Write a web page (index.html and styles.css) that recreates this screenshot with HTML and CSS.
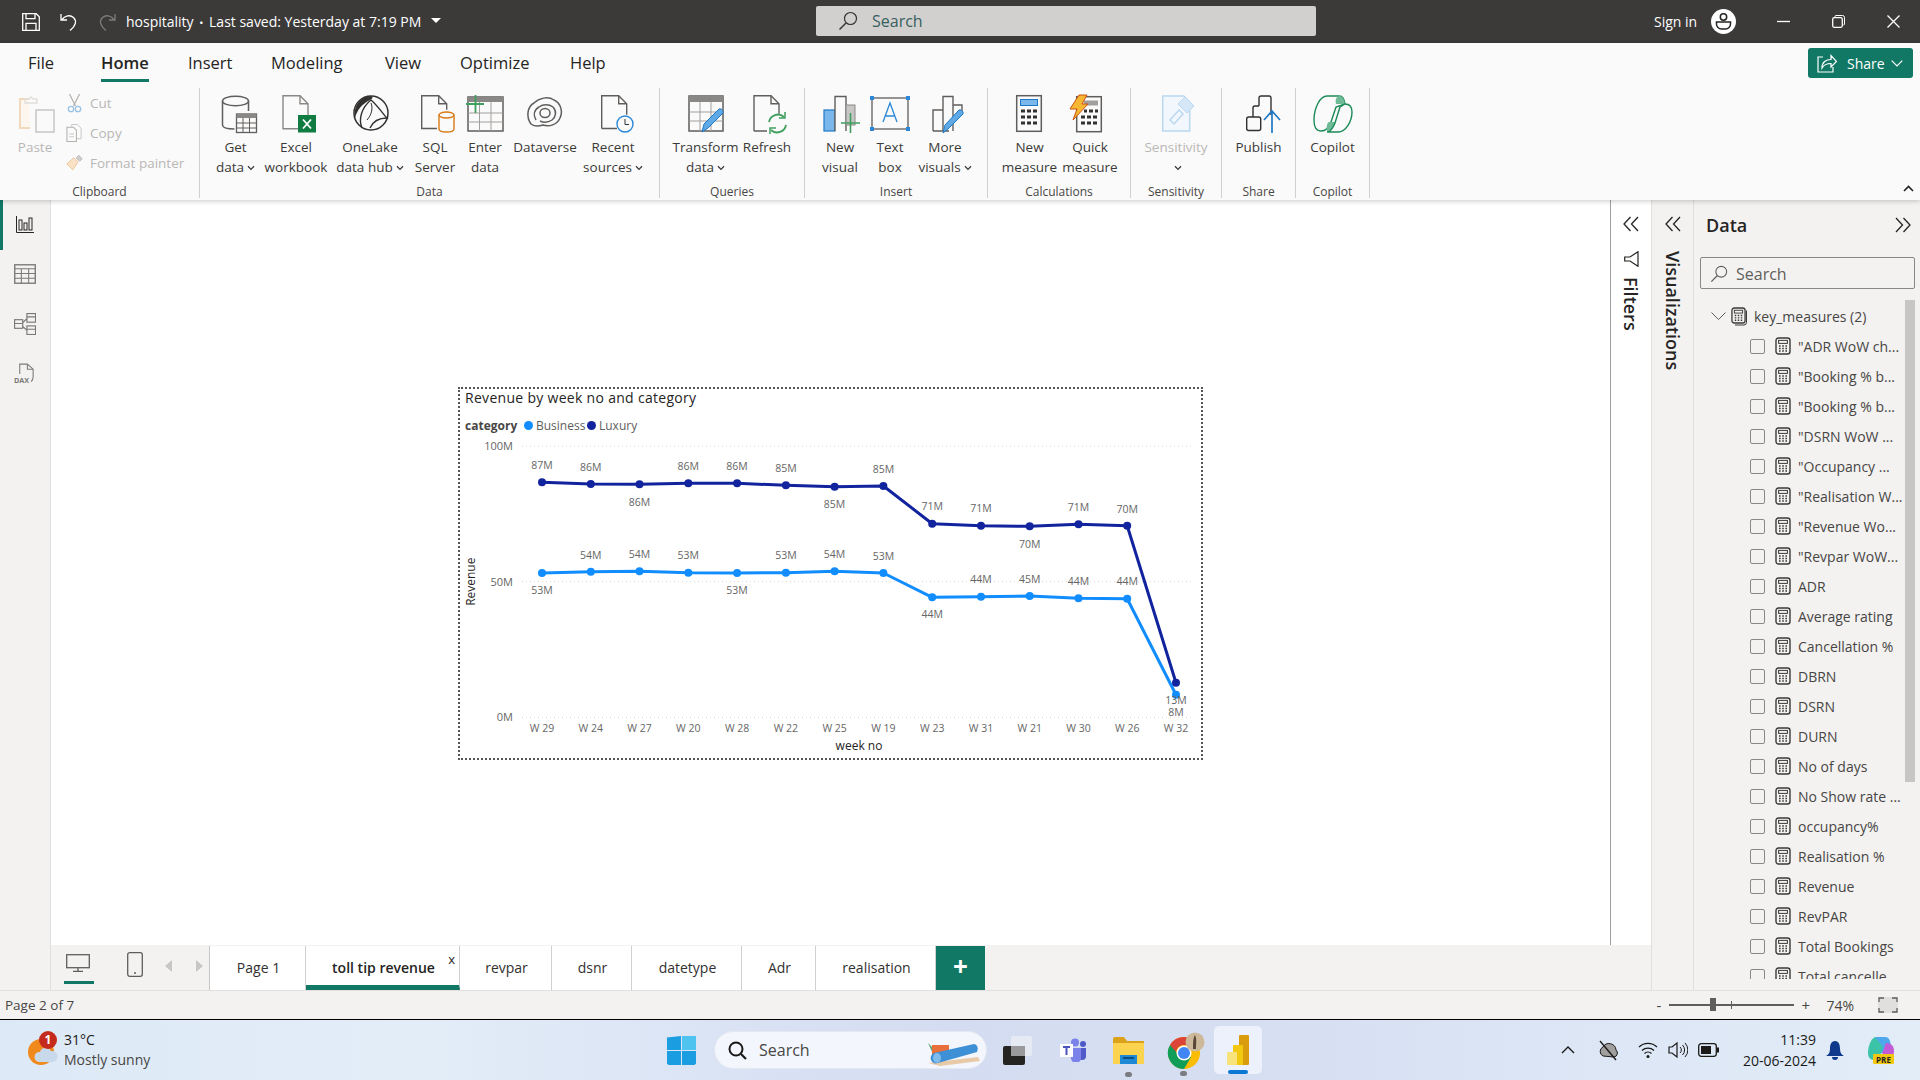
FILE: index.html
```html
<!DOCTYPE html>
<html lang="en">
<head>
    <meta charset="UTF-8">
    <title>hospitality - Power BI Desktop</title>
    <link rel="stylesheet" href="styles.css">
</head>
<body>

<svg class="defs" width="0" height="0">
    <symbol id="calc" viewBox="0 0 16 18">
        <rect x="1" y="1" width="14" height="16" rx="2.5" fill="none" stroke="#3b3a39" stroke-width="1.4"/>
        <rect x="3.6" y="3.4" width="8.8" height="3" fill="none" stroke="#3b3a39"/>
        <path d="M4 9h1.6M7.2 9h1.6M10.4 9H12M4 11.5h1.6M7.2 11.5h1.6M10.4 11.5H12M4 14h1.6M7.2 14h1.6M10.4 14H12" stroke="#3b3a39" stroke-width="1.5"/>
    </symbol>
    <symbol id="chev" viewBox="0 0 8 6">
        <path d="M1 1.2 4 4.4 7 1.2" fill="none" stroke="#3b3a39" stroke-width="1.3"/>
    </symbol>
    <symbol id="dbl-left" viewBox="0 0 16 16">
        <path d="M7.5 1 1 8l6.5 7M15 1 8.500 8l6.500 7" fill="none" stroke="#252423" stroke-width="1.3"/>
    </symbol>
    <symbol id="dbl-right" viewBox="0 0 16 16">
        <path d="M1 1l6.500 7L1 15M8.500 1 15 8l-6.500 7" fill="none" stroke="#252423" stroke-width="1.3"/>
    </symbol>
    <symbol id="lens" viewBox="0 0 20 20">
        <circle cx="12.500" cy="7.500" r="6" fill="none" stroke="currentColor" stroke-width="1.200"/>
        <path d="M8 12 1.500 18.500" stroke="currentColor" stroke-width="1.400"/>
    </symbol>
</svg>

<header class="titlebar">
    <div class="quick-access">
        <svg class="qa-icon" viewBox="0 0 18 18"><path d="M.7.700h13.500l3.100 3.100v13.500H.7zM4 .700v5h9v-5M4 17.300v-7h10v7M6.500 13h0" fill="none" stroke="#fff" stroke-width="1.300"/></svg>
        <svg class="qa-icon" viewBox="0 0 18 18"><path d="M1 1v6h6M1.500 7C5 2.500 10 1.500 13.500 4.500c3.500 3.500 2.500 8-3.500 13" fill="none" stroke="#fff" stroke-width="1.300"/></svg>
        <svg class="qa-icon" viewBox="0 0 18 18"><path d="M17 1v6h-6M16.500 7C13 2.500 8 1.500 4.500 4.500c-3.500 3.500-2.500 8 3.500 13" fill="none" stroke="#7d7c7a" stroke-width="1.300"/></svg>
        <span class="doc-name">hospitality <span class="doc-dot">•</span> Last saved: Yesterday at 7:19 PM</span>
        <span class="doc-caret"></span>
    </div>
    <div class="top-search">
        <svg class="top-lens" viewBox="0 0 20 20"><use href="#lens"/></svg>
        <span>Search</span>
    </div>
    <div class="window-controls">
        <span class="sign-in">Sign in</span>
        <svg class="avatar" viewBox="0 0 25 25">
            <circle cx="12.500" cy="12.500" r="12.500" fill="#fff"/>
            <circle cx="12.500" cy="8" r="3.200" fill="none" stroke="#252423" stroke-width="1.500"/>
            <path d="M5.500 13h14v2a5 5 0 0 1-5 5h-4a5 5 0 0 1-5-5z" fill="none" stroke="#252423" stroke-width="1.500"/>
        </svg>
        <svg class="win-btn win-min" viewBox="0 0 13 13"><path d="M0 6.500h13" stroke="#fff" stroke-width="1.300"/></svg>
        <svg class="win-btn win-max" viewBox="0 0 13 13"><path d="M3 2.500V1.500a1 1 0 0 1 1-1h6.500a2 2 0 0 1 2 2V9a1 1 0 0 1-1 1" fill="none" stroke="#fff"/><rect x=".7" y="2.700" width="9.600" height="9.600" rx="1.500" fill="none" stroke="#fff" stroke-width="1.300"/></svg>
        <svg class="win-btn win-close" viewBox="0 0 13 13"><path d="M.5.500l12 12M12.500.500l-12 12" stroke="#fff" stroke-width="1.300"/></svg>
    </div>
</header>

<section class="ribbon">
    <nav class="menu">
        <span>File</span>
        <span><b class="menu-active">Home</b></span>
        <span>Insert</span>
        <span>Modeling</span>
        <span>View</span>
        <span>Optimize</span>
        <span>Help</span>
    </nav>
    <button class="share">
        <svg class="share-icon" viewBox="0 0 20 19"><path d="M6 3H1v15h15v-5" fill="none" stroke="#fff" stroke-width="1.200"/><path d="M5 14c0-6 4-8.500 9-8.500V1.500l5.500 6-5.500 5.500V9.500c-4 0-7 1-9 4.500z" fill="none" stroke="#fff" stroke-width="1.200"/></svg>
        <span>Share</span>
        <svg class="share-chev" viewBox="0 0 12 7"><path d="M.7.700 6 6l5.300-5.300" fill="none" stroke="#fff" stroke-width="1.200"/></svg>
    </button>

    <div class="groups">
        <div class="group group-clipboard">
            <div class="items">
                <div class="rb-item dim">
                    <svg class="rb-icon" viewBox="-1 0 40 38">
                        <path d="M13 4H4v29h10" fill="#fdf6ee" stroke="#f1d9bd" stroke-width="2"/>
                        <path d="M9 8V4h4l2-2 2 2h4v4z" fill="none" stroke="#e0dedc" stroke-width="1.400"/>
                        <rect x="20" y="15" width="18" height="22" fill="#fafafa" stroke="#c8c6c4" stroke-width="1.500"/>
                    </svg>
                    <span>Paste</span>
                </div>
                <div class="small-col dim">
                    <div class="small-item">
                        <svg viewBox="0 0 16 20"><path d="M3 1l6 12M13 1 7 13" stroke="#b3b0ad" stroke-width="1.200"/><circle cx="4.500" cy="16" r="2.700" fill="none" stroke="#9cc3e3" stroke-width="1.300"/><circle cx="11.500" cy="16" r="2.700" fill="none" stroke="#9cc3e3" stroke-width="1.300"/></svg>
                        <span>Cut</span>
                    </div>
                    <div class="small-item">
                        <svg viewBox="0 0 18 20"><path d="M6 3V1h6l4 4v11h-5" fill="none" stroke="#c8c6c4"/><path d="M1 4h7l3 3v12H1z" fill="none" stroke="#b3b0ad" stroke-width="1.100"/><path d="M3.500 11h5M3.500 14h5" stroke="#c8c6c4"/></svg>
                        <span>Copy</span>
                    </div>
                    <div class="small-item">
                        <svg viewBox="0 0 20 18"><path d="M9 3l5 5-6 9-7-7z" fill="#f9e2c5" stroke="#e9bd8e"/><path d="M12 3l3-3 4 4-3 3z" fill="#d2d0ce" stroke="#b3b0ad"/></svg>
                        <span>Format painter</span>
                    </div>
                </div>
            </div>
            <div class="group-label">Clipboard</div>
        </div>

        <div class="group group-data">
            <div class="items">
                <div class="rb-item">
                    <svg class="rb-icon" viewBox="-3.500 0 40 38">
                        <path d="M3 6v24c0 2.500 5 4 12 4M29 6v10" fill="none" stroke="#605e5c" stroke-width="1.500"/>
                        <ellipse cx="16" cy="6" rx="13" ry="4.800" fill="#fafafa" stroke="#605e5c" stroke-width="1.500"/>
                        <rect x="17" y="19" width="20" height="18.500" fill="#fafafa" stroke="#605e5c" stroke-width="1.300"/>
                        <rect x="17" y="19" width="20" height="4" fill="#8a8886"/>
                        <path d="M23.500 23v14M30 23v14M17 28h20M17 33h20" stroke="#605e5c"/>
                    </svg>
                    <span>Get<br>data<svg class="chev"><use href="#chev"/></svg></span>
                </div>
                <div class="rb-item">
                    <svg class="rb-icon" viewBox="0 0 40 38">
                        <path d="M7 .7h17l8 8v25H7z" fill="#fafafa" stroke="#8a8886" stroke-width="1.400"/>
                        <path d="M24 .7v8h8" fill="none" stroke="#8a8886" stroke-width="1.400"/>
                        <rect x="22" y="20" width="18" height="17.500" fill="#107c41"/>
                        <path d="M27 24.500l8 9M35 24.500l-8 9" stroke="#fff" stroke-width="1.800"/>
                    </svg>
                    <span>Excel<br>workbook</span>
                </div>
                <div class="rb-item">
                    <svg class="rb-icon" viewBox="0 0 40 38">
                        <circle cx="21" cy="18" r="17" fill="#fafafa" stroke="#323130" stroke-width="1.500"/>
                        <path d="M19 1C9 3 3 12 5 23c2-8 7-14 15-18 4-2 3-4-1-4z" fill="#323130"/>
                        <path d="M12 33C8 24 12 12 21 5c7 6 12 14 16 18-6 0-13 1-17 10" fill="none" stroke="#323130" stroke-width="1.400"/>
                        <path d="M21 8c2 5 1 11-4 17" fill="none" stroke="#323130"/>
                    </svg>
                    <span>OneLake<br>data hub<svg class="chev"><use href="#chev"/></svg></span>
                </div>
                <div class="rb-item">
                    <svg class="rb-icon" viewBox="0 0 40 38">
                        <path d="M22 33.500H6.700V.7h17l8 8v6" fill="#fafafa" stroke="#605e5c" stroke-width="1.400"/>
                        <path d="M23.700.7v8h8" fill="none" stroke="#605e5c" stroke-width="1.400"/>
                        <path d="M24 20v14c0 2 3 3 7.500 3s7.500-1 7.500-3V20" fill="#fafafa" stroke="#d87a16" stroke-width="1.400"/>
                        <ellipse cx="31.500" cy="20" rx="7.500" ry="3" fill="#fafafa" stroke="#d87a16" stroke-width="1.400"/>
                    </svg>
                    <span>SQL<br>Server</span>
                </div>
                <div class="rb-item">
                    <svg class="rb-icon" viewBox="0 0 40 38">
                        <rect x="3" y="2" width="35" height="34" fill="#fafafa" stroke="#605e5c" stroke-width="1.500"/>
                        <rect x="3" y="2" width="35" height="5" fill="#8a8886"/>
                        <path d="M14.500 7v29M26 7v29M3 18h35M3 27h35" stroke="#a19f9d"/>
                        <path d="M10.500 0v18M1 9h18" stroke="#3f9f5f" stroke-width="1.800"/>
                    </svg>
                    <span>Enter<br>data</span>
                </div>
                <div class="rb-item">
                    <svg class="rb-icon" viewBox="0 0 40 38">
                        <path d="M6 29C1 22 2 12 9 8c5-5 14-7 20-3 7 3 9 12 6 18-3 7-11 9-17 7-3 1-8 2-12-1z" fill="none" stroke="#605e5c" stroke-width="1.500"/>
                        <path d="M11 25c-3-5-2-10 3-13 4-3 10-3 14 0 4 4 3 10-1 13-3 2-8 3-12 1" fill="none" stroke="#605e5c" stroke-width="1.500"/>
                        <ellipse cx="20" cy="18" rx="5" ry="4.500" fill="none" stroke="#605e5c" stroke-width="1.500"/>
                    </svg>
                    <span>Dataverse</span>
                </div>
                <div class="rb-item">
                    <svg class="rb-icon" viewBox="0 0 40 38">
                        <path d="M8.700 33.500V.7h17l8 8v11M8.700 33.500H24" fill="none" stroke="#605e5c" stroke-width="1.400"/>
                        <path d="M25.700.7v8h8" fill="none" stroke="#605e5c" stroke-width="1.400"/>
                        <circle cx="32" cy="29" r="8" fill="#fafafa" stroke="#2b88d8" stroke-width="1.400"/>
                        <path d="M32 24v5.500h4" fill="none" stroke="#323130"/>
                    </svg>
                    <span>Recent<br>sources<svg class="chev"><use href="#chev"/></svg></span>
                </div>
            </div>
            <div class="group-label">Data</div>
        </div>

        <div class="group group-queries">
            <div class="items">
                <div class="rb-item">
                    <svg class="rb-icon" viewBox="0 0 40 38">
                        <rect x="3" y="1" width="34" height="35" fill="#fafafa" stroke="#605e5c" stroke-width="1.500"/>
                        <rect x="3" y="1" width="34" height="6" fill="#8a8886"/>
                        <path d="M14 7v29M25 7v29M3 17h34M3 26h34" stroke="#a19f9d"/>
                        <path d="M16 37l2-8 15-15c2-1 5 2 4 4L22 33z" fill="#5ea9e6" stroke="#1f78c4"/>
                    </svg>
                    <span>Transform<br>data<svg class="chev"><use href="#chev"/></svg></span>
                </div>
                <div class="rb-item">
                    <svg class="rb-icon" viewBox="0 0 40 38">
                        <path d="M7 36V.7h17l8 8v10M7 36h13" fill="none" stroke="#605e5c" stroke-width="1.400"/>
                        <path d="M24 .7v8h8" fill="none" stroke="#605e5c" stroke-width="1.400"/>
                        <path d="M22 27a9 9 0 0 1 15-5M39 30a9 9 0 0 1-15 5" fill="none" stroke="#3f9f5f" stroke-width="1.800"/>
                        <path d="M38 17v6h-6M23 39v-6h6" fill="none" stroke="#3f9f5f" stroke-width="1.500"/>
                    </svg>
                    <span>Refresh</span>
                </div>
            </div>
            <div class="group-label">Queries</div>
        </div>

        <div class="group group-insert">
            <div class="items">
                <div class="rb-item">
                    <svg class="rb-icon" viewBox="0 0 40 38">
                        <rect x="4" y="15" width="11" height="21" fill="#7ab8ec" stroke="#1f78c4" stroke-width="1.200"/>
                        <path d="M15 36V1.500h11V36" fill="#fafafa" stroke="#605e5c" stroke-width="1.400"/>
                        <rect x="26" y="10" width="9" height="20" fill="#c8c6c4" stroke="#8a8886"/>
                        <path d="M30.500 18v20M21 28h19" stroke="#3f9f5f" stroke-width="1.600"/>
                    </svg>
                    <span>New<br>visual</span>
                </div>
                <div class="rb-item">
                    <svg class="rb-icon" viewBox="0 0 40 38">
                        <rect x="2" y="3" width="36" height="31" fill="#fafafa" stroke="#605e5c" stroke-width="1.300"/>
                        <path d="M0 1h4v4H0zM36 1h4v4h-4zM0 32h4v4H0zM36 32h4v4h-4z" fill="#2b88d8"/>
                        <path d="M13 27l7-19 7 19M15.500 21h9" fill="none" stroke="#2b88d8" stroke-width="1.300"/>
                    </svg>
                    <span>Text<br>box</span>
                </div>
                <div class="rb-item">
                    <svg class="rb-icon" viewBox="-2 0 40 38">
                        <path d="M6 36V15h10M16 36V1.500h10V36M26 10h9v9M6 36h16" fill="#fafafa" stroke="#605e5c" stroke-width="1.400"/>
                        <path d="M16 38l2-8 14-15c2-1 5 2 4 4L21 34z" fill="#5ea9e6" stroke="#1f78c4"/>
                    </svg>
                    <span>More<br>visuals<svg class="chev"><use href="#chev"/></svg></span>
                </div>
            </div>
            <div class="group-label">Insert</div>
        </div>

        <div class="group group-calc">
            <div class="items">
                <div class="rb-item">
                    <svg class="rb-icon" viewBox="1 0 40 38">
                        <rect x="7.700" y=".7" width="24.600" height="35.600" fill="#fafafa" stroke="#605e5c" stroke-width="1.500"/>
                        <rect x="11.500" y="4.500" width="17" height="6" fill="#7ab8ec" stroke="#1f78c4"/>
                        <path d="M12 16h4M18 16h4M24 16h4M12 22h4M18 22h4M24 22h4M12 28h4M18 28h4M24 28h4" stroke="#323130" stroke-width="3"/>
                    </svg>
                    <span>New<br>measure</span>
                </div>
                <div class="rb-item">
                    <svg class="rb-icon" viewBox="1 0 40 38">
                        <rect x="7.700" y="1.700" width="24.600" height="35" fill="#fafafa" stroke="#605e5c" stroke-width="1.500"/>
                        <rect x="15" y="5.500" width="14" height="5" fill="#a19f9d"/>
                        <path d="M15 16h3M20 16h4M26 16h3M12 22h4M18 22h4M24 22h4M12 28h4M18 28h4M24 28h4" stroke="#323130" stroke-width="3"/>
                        <path d="M10 0h8l-5 9h6L4 25l4-11H1z" fill="#f7b733" stroke="#ca5010"/>
                    </svg>
                    <span>Quick<br>measure</span>
                </div>
            </div>
            <div class="group-label">Calculations</div>
        </div>

        <div class="group group-sens">
            <div class="items">
                <div class="rb-item dim">
                    <svg class="rb-icon" viewBox="0 0 40 38">
                        <path d="M6.700 1h21l6 6v29h-27z" fill="#f1f7fc" stroke="#b9d7ef" stroke-width="1.500"/>
                        <path d="M14 25l9-10 4 4-9 10z" fill="none" stroke="#b9d7ef" stroke-width="1.500"/>
                        <path d="M22 9l7-7 9 9-7 7z" fill="#d5e7f6" stroke="#b9d7ef"/>
                    </svg>
                    <span>Sensitivity<br><svg class="chev"><use href="#chev"/></svg></span>
                </div>
            </div>
            <div class="group-label">Sensitivity</div>
        </div>

        <div class="group group-share">
            <div class="items">
                <div class="rb-item">
                    <svg class="rb-icon" viewBox="0 0 40 38">
                        <rect x="7.700" y="22" width="14" height="13.500" rx="2" fill="none" stroke="#323130" stroke-width="1.400"/>
                        <path d="M14 22v-9a2 2 0 0 1 2-2h4M20 11V3a2 2 0 0 1 2-2h8a2 2 0 0 1 2 2v17" fill="none" stroke="#323130" stroke-width="1.400"/>
                        <path d="M33 38V17M25 25l8-9 8 9" fill="none" stroke="#1f78c4" stroke-width="1.700"/>
                    </svg>
                    <span>Publish</span>
                </div>
            </div>
            <div class="group-label">Share</div>
        </div>

        <div class="group group-copilot">
            <div class="items">
                <div class="rb-item">
                    <svg class="rb-icon" viewBox="0 0 40 38">
                        <path d="M14 1h12c4 0 5 3 6 8l-9 3-5 15c-2 6-6 9-10 9-5 0-7-5-7-11C1 13 7 1 14 1z" fill="#fafafa" stroke="#1a8a57" stroke-width="1.400"/>
                        <path d="M26 1c4 0 5 3 6 8h-9c-1-4 0-7 3-8zM14 36c4 0 7-3 9-9h-7c-2 0-3 7-2 9z" fill="#6fbb98"/>
                        <path d="M32 9c5 0 7 3 7 8 0 9-6 20-14 20H14c4 0 6-4 8-9l5-16z" fill="#fafafa" stroke="#1a8a57" stroke-width="1.400"/>
                    </svg>
                    <span>Copilot</span>
                </div>
            </div>
            <div class="group-label">Copilot</div>
        </div>
    </div>
    <svg class="collapse" viewBox="0 0 11 7"><path d="M1 6l4.500-4.500L10 6" fill="none" stroke="#252423" stroke-width="1.600"/></svg>
</section>

<main class="main">
    <aside class="rail">
        <svg class="rail-icon active" viewBox="0 0 18 17"><path d="M.5 0v16.500H18" fill="none" stroke="#252423"/><rect x="3" y="4" width="3" height="10" fill="none" stroke="#252423"/><rect x="8" y="7" width="3" height="7" fill="none" stroke="#252423"/><rect x="13" y="2" width="3" height="12" fill="none" stroke="#252423"/></svg>
        <svg class="rail-icon" viewBox="0 0 21 19"><rect x=".7" y=".7" width="19.600" height="17.600" fill="none" stroke="#7a7977" stroke-width="1.300"/><path d="M.7 4.500h19.600M.7 9h19.600M.7 13.500h19.600M7 4.500v14M14 4.500v14" stroke="#7a7977"/></svg>
        <svg class="rail-icon" viewBox="0 0 23 23"><g fill="none" stroke="#7a7977" stroke-width="1.200"><rect x=".6" y="7" width="8.500" height="9"/><rect x="13.500" y=".6" width="9" height="9"/><rect x="13.500" y="13.500" width="9" height="9"/><path d="M9 10l4.500-4M9 14l4.500 4M.6 11h8.500M13.500 4h9M13.500 17h9"/></g></svg>
        <svg class="rail-icon" viewBox="0 0 23 22"><path d="M6 11V.7h8l6 5.300V14c0 2-1 4-2 5" fill="none" stroke="#7a7977" stroke-width="1.100"/><path d="M14 .7v5.300h6" fill="none" stroke="#7a7977" stroke-width="1.100"/><text x="0" y="20.500" class="dax-text">DAX</text></svg>
    </aside>

    <div class="workspace">
        <div class="canvas-row">
            <div class="canvas">
                <article class="visual">
                    <div class="visual-title">Revenue by week no and category</div>
                    <div class="legend">
                        <b>category</b>
                        <i class="dot dot-business"></i><span class="legend-name name-business">Business</span>
                        <i class="dot dot-luxury"></i><span>Luxury</span>
                    </div>
                    <svg class="plot" viewBox="460 436 741 322">
                        <g class="grid">
                            <path d="M522 446H1194M522 581.700H1194M522 717.300H1194"/>
                        </g>
                        <g class="ylabels">
                            <text x="513" y="450">100M</text>
                            <text x="513" y="586">50M</text>
                            <text x="513" y="721">0M</text>
                        </g>
                        <text class="axis-title" transform="translate(475 581.700) rotate(-90)">Revenue</text>
                        <text class="axis-title" x="859" y="750">week no</text>

                        <polyline class="line-business" points="542,573 590.800,571.700 639.500,571.300 688.300,572.700 737.100,573 785.900,572.700 834.600,571.300 883.400,573 932.200,597.300 981,596.700 1029.700,596 1078.500,598.300 1127.200,598.700 1176,694.700"/>
                        <polyline class="line-luxury" points="542,482.300 590.800,484 639.500,484.300 688.300,483.300 737.100,483.300 785.900,485.300 834.600,486.700 883.400,486 932.200,523.700 981,525.700 1029.700,526.300 1078.500,524.300 1127.200,525.700 1176,682.700"/>

                        <g class="pts-business">
                            <circle cx="542" cy="573" r="4"/><circle cx="590.800" cy="571.700" r="4"/><circle cx="639.500" cy="571.300" r="4"/><circle cx="688.300" cy="572.700" r="4"/><circle cx="737.100" cy="573" r="4"/><circle cx="785.900" cy="572.700" r="4"/><circle cx="834.600" cy="571.300" r="4"/><circle cx="883.400" cy="573" r="4"/><circle cx="932.200" cy="597.300" r="4"/><circle cx="981" cy="596.700" r="4"/><circle cx="1029.700" cy="596" r="4"/><circle cx="1078.500" cy="598.300" r="4"/><circle cx="1127.200" cy="598.700" r="4"/><circle cx="1176" cy="694.700" r="4"/>
                        </g>
                        <g class="pts-luxury">
                            <circle cx="542" cy="482.300" r="4"/><circle cx="590.800" cy="484" r="4"/><circle cx="639.500" cy="484.300" r="4"/><circle cx="688.300" cy="483.300" r="4"/><circle cx="737.100" cy="483.300" r="4"/><circle cx="785.900" cy="485.300" r="4"/><circle cx="834.600" cy="486.700" r="4"/><circle cx="883.400" cy="486" r="4"/><circle cx="932.200" cy="523.700" r="4"/><circle cx="981" cy="525.700" r="4"/><circle cx="1029.700" cy="526.300" r="4"/><circle cx="1078.500" cy="524.300" r="4"/><circle cx="1127.200" cy="525.700" r="4"/><circle cx="1176" cy="682.700" r="4"/>
                        </g>

                        <g class="point-labels">
                            <text x="542" y="469">87M</text><text x="590.800" y="471">86M</text><text x="639.500" y="506">86M</text><text x="688.300" y="470">86M</text><text x="737.100" y="470">86M</text><text x="785.900" y="472">85M</text><text x="834.600" y="508">85M</text><text x="883.400" y="473">85M</text><text x="932.200" y="510">71M</text><text x="981" y="512">71M</text><text x="1029.700" y="548">70M</text><text x="1078.500" y="511">71M</text><text x="1127.200" y="513">70M</text><text x="1176" y="704">13M</text>
                            <text x="542" y="594">53M</text><text x="590.800" y="559">54M</text><text x="639.500" y="558">54M</text><text x="688.300" y="559">53M</text><text x="737.100" y="594">53M</text><text x="785.900" y="559">53M</text><text x="834.600" y="558">54M</text><text x="883.400" y="560">53M</text><text x="932.200" y="618">44M</text><text x="981" y="583">44M</text><text x="1029.700" y="583">45M</text><text x="1078.500" y="585">44M</text><text x="1127.200" y="585">44M</text><text x="1176" y="716">8M</text>
                        </g>

                        <g class="xlabels">
                            <text x="542" y="732">W 29</text><text x="590.800" y="732">W 24</text><text x="639.500" y="732">W 27</text><text x="688.300" y="732">W 20</text><text x="737.100" y="732">W 28</text><text x="785.900" y="732">W 22</text><text x="834.600" y="732">W 25</text><text x="883.400" y="732">W 19</text><text x="932.200" y="732">W 23</text><text x="981" y="732">W 31</text><text x="1029.700" y="732">W 21</text><text x="1078.500" y="732">W 30</text><text x="1127.200" y="732">W 26</text><text x="1176" y="732">W 32</text>
                        </g>
                    </svg>
                </article>
            </div>
            <aside class="filters-pane">
                <svg class="pane-chevs"><use href="#dbl-left"/></svg>
                <svg class="filter-icon" viewBox="0 0 15 16"><path d="M14 .7V15.300L6 10H.7V6H6z" fill="none" stroke="#252423" stroke-width="1.200"/></svg>
                <span class="pane-vtext">Filters</span>
            </aside>
        </div>
        <div class="pagebar">
            <div class="view-switch">
                <svg class="desk-icon" viewBox="0 0 24 18"><rect x=".7" y=".7" width="22.600" height="13" fill="none" stroke="#605e5c" stroke-width="1.300"/><path d="M12 14v3M7 17.300h10" stroke="#605e5c" stroke-width="1.300"/></svg>
                <svg class="phone-icon" viewBox="0 0 16 25"><rect x=".7" y=".7" width="14.600" height="23.600" rx="2" fill="none" stroke="#605e5c" stroke-width="1.300"/><circle cx="8" cy="21" r="1" fill="#605e5c"/></svg>
                <svg class="nav-arrow" viewBox="0 0 8 12"><path d="M7 0v12L0 6z" fill="#c8c6c4"/></svg>
                <svg class="nav-arrow" viewBox="0 0 8 12"><path d="M1 0v12l7-6z" fill="#c8c6c4"/></svg>
            </div>
            <div class="page-tabs">
                <div class="page-tab">Page 1</div>
                <div class="page-tab active">toll tip revenue<span class="tab-x">x</span></div>
                <div class="page-tab">revpar</div>
                <div class="page-tab">dsnr</div>
                <div class="page-tab">datetype</div>
                <div class="page-tab">Adr</div>
                <div class="page-tab">realisation</div>
                <div class="page-add">+</div>
            </div>
        </div>
    </div>

    <aside class="viz-pane">
        <svg class="pane-chevs"><use href="#dbl-left"/></svg>
        <span class="pane-vtext">Visualizations</span>
    </aside>

    <aside class="data-pane">
        <div class="data-head">
            <span>Data</span>
            <svg class="pane-chevs"><use href="#dbl-right"/></svg>
        </div>
        <div class="data-search">
            <svg viewBox="0 0 20 20"><use href="#lens"/></svg>
            <span>Search</span>
        </div>
        <div class="field-list">
            <div class="field-root">
                <svg class="root-chev" viewBox="0 0 15 8"><path d="M.5.500 7.500 7.500l7-7" fill="none" stroke="#605e5c"/></svg>
                <svg class="root-calc" viewBox="0 0 17 19"><use href="#calc" width="15" height="17"/><path d="M15.500 3.500v12a2.500 2.500 0 0 1-2.500 2.500H4" fill="none" stroke="#3b3a39"/></svg>
                <span>key_measures (2)</span>
            </div>
            <div class="field"><i class="check"></i><svg class="calc"><use href="#calc"/></svg><span>"ADR WoW ch...</span></div>
            <div class="field"><i class="check"></i><svg class="calc"><use href="#calc"/></svg><span>"Booking % b...</span></div>
            <div class="field"><i class="check"></i><svg class="calc"><use href="#calc"/></svg><span>"Booking % b...</span></div>
            <div class="field"><i class="check"></i><svg class="calc"><use href="#calc"/></svg><span>"DSRN WoW ...</span></div>
            <div class="field"><i class="check"></i><svg class="calc"><use href="#calc"/></svg><span>"Occupancy ...</span></div>
            <div class="field"><i class="check"></i><svg class="calc"><use href="#calc"/></svg><span>"Realisation W...</span></div>
            <div class="field"><i class="check"></i><svg class="calc"><use href="#calc"/></svg><span>"Revenue Wo...</span></div>
            <div class="field"><i class="check"></i><svg class="calc"><use href="#calc"/></svg><span>"Revpar WoW...</span></div>
            <div class="field"><i class="check"></i><svg class="calc"><use href="#calc"/></svg><span>ADR</span></div>
            <div class="field"><i class="check"></i><svg class="calc"><use href="#calc"/></svg><span>Average rating</span></div>
            <div class="field"><i class="check"></i><svg class="calc"><use href="#calc"/></svg><span>Cancellation %</span></div>
            <div class="field"><i class="check"></i><svg class="calc"><use href="#calc"/></svg><span>DBRN</span></div>
            <div class="field"><i class="check"></i><svg class="calc"><use href="#calc"/></svg><span>DSRN</span></div>
            <div class="field"><i class="check"></i><svg class="calc"><use href="#calc"/></svg><span>DURN</span></div>
            <div class="field"><i class="check"></i><svg class="calc"><use href="#calc"/></svg><span>No of days</span></div>
            <div class="field"><i class="check"></i><svg class="calc"><use href="#calc"/></svg><span>No Show rate ...</span></div>
            <div class="field"><i class="check"></i><svg class="calc"><use href="#calc"/></svg><span>occupancy%</span></div>
            <div class="field"><i class="check"></i><svg class="calc"><use href="#calc"/></svg><span>Realisation %</span></div>
            <div class="field"><i class="check"></i><svg class="calc"><use href="#calc"/></svg><span>Revenue</span></div>
            <div class="field"><i class="check"></i><svg class="calc"><use href="#calc"/></svg><span>RevPAR</span></div>
            <div class="field"><i class="check"></i><svg class="calc"><use href="#calc"/></svg><span>Total Bookings</span></div>
            <div class="field"><i class="check"></i><svg class="calc"><use href="#calc"/></svg><span>Total cancelle</span></div>
        </div>
        <div class="scroll-thumb"></div>
    </aside>
</main>

<footer class="statusbar">
    <span>Page 2 of 7</span>
    <div class="zoom-ctl">
        <span class="zoom-sign">-</span>
        <div class="zoom-track"><i class="zoom-thumb"></i><i class="zoom-tick"></i></div>
        <span class="zoom-sign">+</span>
        <span class="zoom-pct">74%</span>
        <svg class="fit-icon" viewBox="0 0 20 16"><rect width="20" height="16" fill="#e1dfdd"/><path d="M1 5V1h5M14 1h5v4M19 11v4h-5M6 15H1v-4" fill="none" stroke="#605e5c" stroke-width="1.300"/></svg>
    </div>
</footer>

<div class="taskbar">
    <div class="weather">
        <svg class="weather-icon" viewBox="0 0 32 36">
            <circle cx="14" cy="21" r="13" fill="#f08a1c"/>
            <path d="M12 31a5 5 0 0 1 1-10 6 6 0 0 1 11-1 5.500 5.500 0 0 1 2 11z" fill="#c9d9ec"/>
            <circle cx="21" cy="9" r="9" fill="#c42b1c"/>
            <text x="21" y="13" class="badge-num">1</text>
        </svg>
        <div class="weather-text"><span>31°C</span><span class="weather-sub">Mostly sunny</span></div>
    </div>

    <div class="task-center">
        <svg class="win-logo" viewBox="0 0 29 29">
            <path d="M0 1.500 14 0v14H0zM15 0l14 0v14H15zM0 15h14v14H1.500L0 27.500zM15 15h14v12.500L27.500 29H15z" fill="#1b9de2"/>
            <path d="M15 0h14v14H15z" fill="#4fc3f0"/>
        </svg>
        <div class="task-search">
            <svg class="ts-lens" viewBox="0 0 19 19"><circle cx="8" cy="8" r="6.500" fill="none" stroke="#1b1a19" stroke-width="2"/><path d="M13 13l5 5" stroke="#1b1a19" stroke-width="2.200"/></svg>
            <span>Search</span>
            <svg class="ts-art" viewBox="0 0 58 27">
                <path d="M6 4l8 8-2 5z" fill="#5ea26f"/>
                <rect x="10" y="6" width="17" height="14" fill="#e9703a"/>
                <path d="M6 24l50-6 2 4-40 5z" fill="#e8c9a8"/>
                <path d="M12 14 52 5a4 5 0 0 1 3 8L16 24a5 5 0 0 1-4-10z" fill="#3d8fd6"/>
                <ellipse cx="15" cy="19" rx="4" ry="5" fill="#7fbcec"/>
            </svg>
        </div>
        <svg class="task-icon task-view" viewBox="0 0 29 29">
            <rect x="0" y="10" width="22" height="19" rx="2" fill="#252423"/>
            <rect x="8" y="0" width="21" height="20" rx="2" fill="#e8ecf3" opacity=".85"/>
            <rect x="8" y="10" width="14" height="10" fill="#9a9a9c"/>
        </svg>
        <svg class="task-icon teams" viewBox="0 0 27 24">
            <circle cx="15" cy="4.500" r="4" fill="#7b83eb"/>
            <circle cx="23" cy="6" r="3" fill="#5059c9"/>
            <path d="M18 10h8v8a4 4 0 0 1-8 0z" fill="#5059c9"/>
            <path d="M8 10h13v10a5 5 0 0 1-10 0z" fill="#7b83eb"/>
            <rect x="0" y="6" width="13" height="13" fill="#fff"/>
            <path d="M3 9h7M6.500 9v8" stroke="#4b53bc" stroke-width="2"/>
        </svg>
        <div class="task-slot">
            <svg class="task-icon folder" viewBox="0 0 31 27">
                <path d="M0 2a2 2 0 0 1 2-2h9l3 4h17v4H0z" fill="#dba21a"/>
                <rect y="6" width="31" height="21" rx="1" fill="#fcd34f"/>
                <rect x="7" y="18" width="17" height="9" fill="#1e8ad6"/>
                <path d="M10 21h11" stroke="#0b3a66" stroke-width="1.500"/>
            </svg>
            <i class="run-dot"></i>
        </div>
        <div class="task-slot chrome-slot">
            <svg class="task-icon chrome" viewBox="0 0 38 37">
                <circle cx="17" cy="21" r="16" fill="#fbbc04"/>
                <path d="M17 5a16 16 0 0 0-14 8l7 12-1-4a8 8 0 0 1 8-8h14a16 16 0 0 0-14-8z" fill="#db4437"/>
                <path d="M3 13a16 16 0 0 0 14 24l7-12h-7a8 8 0 0 1-7-4z" fill="#0f9d58"/>
                <circle cx="17" cy="21" r="7.500" fill="#fff"/>
                <circle cx="17" cy="21" r="6" fill="#4285f4"/>
                <circle cx="28" cy="10" r="9.500" fill="#cdb99a"/>
                <path d="M28 3c-2 3-2 9-2 14h3c0-5 1-10-1-14z" fill="#5a4636"/>
            </svg>
            <i class="run-dot"></i>
        </div>
        <div class="task-tile">
            <svg class="pbi-icon" viewBox="0 0 22 30">
                <rect x="12" y="0" width="10" height="30" rx="1" fill="#d99c0d"/>
                <rect x="6" y="10" width="10" height="20" rx="1" fill="#f2c811"/>
                <rect x="0" y="17" width="10" height="13" rx="1" fill="#f8e27a"/>
            </svg>
            <i class="run-bar"></i>
        </div>
    </div>

    <div class="tray">
        <svg class="tray-chev" viewBox="0 0 14 8"><path d="M1 7l6-6 6 6" fill="none" stroke="#1b1a19" stroke-width="1.400"/></svg>
        <svg class="tray-icon cloud-off" viewBox="0 0 22 22"><path d="M6 17a5 5 0 0 1 0-9 7 7 0 0 1 13 3 4 4 0 0 1-2 7z" fill="#a19f9d" stroke="#1b1a19"/><path d="M3 2l16 19" stroke="#1b1a19" stroke-width="1.400"/></svg>
        <svg class="tray-icon wifi" viewBox="0 0 20 18"><path d="M1 6a13 13 0 0 1 18 0M4 9.500a9 9 0 0 1 12 0M6.500 12.500a5 5 0 0 1 7 0" fill="none" stroke="#1b1a19" stroke-width="1.300"/><circle cx="10" cy="15.500" r="1.500" fill="#1b1a19"/></svg>
        <svg class="tray-icon vol" viewBox="0 0 20 18"><path d="M1 6h3l5-4v14l-5-4H1z" fill="none" stroke="#1b1a19" stroke-width="1.200"/><path d="M12 6a4 4 0 0 1 0 6M14.500 4a7 7 0 0 1 0 10M17 2a10 10 0 0 1 0 14" fill="none" stroke="#1b1a19"/></svg>
        <svg class="tray-icon batt" viewBox="0 0 21 14"><rect x=".7" y=".7" width="17.600" height="12.600" rx="2.500" fill="none" stroke="#1b1a19" stroke-width="1.300"/><rect x="3" y="3" width="10" height="8" fill="#1b1a19"/><rect x="19" y="4.500" width="2" height="5" fill="#1b1a19"/></svg>
        <div class="clock"><span>11:39</span><span>20-06-2024</span></div>
        <svg class="bell" viewBox="0 0 18 19"><path d="M9 0c4 0 5 4 5 8s2 6 4 7H0c2-1 4-3 4-7s1-8 5-8z" fill="#0f3a8c"/><path d="M6 16h6a3 3 0 0 1-6 0z" fill="#0f3a8c"/></svg>
        <svg class="copilot-pre" viewBox="0 0 30 28">
            <path d="M9 1h10c4 0 5 3 6 8l2 8H15z" fill="#4fa8ec"/>
            <path d="M9 1C5 3 2 10 2 17c0 4 2 7 6 7h5l4-13z" fill="#3cc4a8"/>
            <path d="M20 7c5 0 8 3 8 8 0 3-1 6-3 9H14z" fill="#c45bd6"/>
            <rect x="7" y="18" width="21" height="10" rx="1" fill="#f2c811"/>
            <text x="17.500" y="26.500" class="pre-text">PRE</text>
        </svg>
    </div>
</div>

</body>
</html>
```

FILE: styles.css
```css
* {
    box-sizing: border-box;
}
html, body {
    margin: 0;
    width: 1920px;
    height: 1080px;
    overflow: hidden;
}
body {
    display: flex;
    flex-direction: column;
    font-family: "Open Sans", "Noto Sans", sans-serif;
    color: #252423;
    background: #f3f2f1;
}
.defs {
    position: absolute;
}
i {
    display: block;
}

/* title bar */
.titlebar {
    height: 43px;
    flex: none;
    background: #3b3a39;
    color: #fff;
    display: flex;
    align-items: center;
    position: relative;
}
.quick-access {
    display: flex;
    align-items: center;
    width: 816px;
    padding-left: 22px;
}
.qa-icon {
    width: 18px;
    height: 18px;
    margin-right: 20px;
}
.doc-name {
    font-size: 14px;
    margin-left: -10px;
    white-space: nowrap;
}
.doc-dot {
    font-size: 11px;
    margin: 0 2px;
}
.doc-caret {
    width: 0;
    height: 0;
    margin-left: 10px;
    margin-top: -3px;
    border-left: 5px solid transparent;
    border-right: 5px solid transparent;
    border-top: 5px solid #fff;
}
.top-search {
    width: 500px;
    height: 30px;
    margin-top: -1px;
    background: #d2d0ce;
    border-radius: 2px;
    display: flex;
    align-items: center;
    padding-left: 22px;
    color: #37605f;
    font-size: 16px;
}
.top-lens {
    width: 20px;
    height: 20px;
    color: #323130;
    margin-right: 14px;
}
.window-controls {
    flex: 1;
    display: flex;
    align-items: center;
    padding-left: 338px;
}
.sign-in {
    font-size: 14px;
    width: 57px;
    white-space: nowrap;
}
.avatar {
    width: 25px;
    height: 25px;
}
.win-btn {
    width: 13px;
    height: 13px;
}
.win-min {
    margin-left: 41px;
}
.win-max {
    margin-left: 42px;
}
.win-close {
    margin-left: 42px;
}

/* ribbon */
.ribbon {
    height: 157px;
    flex: none;
    background: #fafafa;
    position: relative;
    z-index: 2;
    box-shadow: 0 1px 5px rgba(0, 0, 0, .22);
}
.menu {
    height: 45px;
    padding-left: 28px;
    display: grid;
    grid-template-columns: 73px 87px 83px 114px 75px 110px 60px;
    font-size: 16.500px;
    line-height: 24px;
}
.menu span {
    padding-top: 8px;
}
.menu-active {
    display: inline-block;
    font-weight: 600;
    padding-bottom: 4px;
    border-bottom: 3px solid #117865;
}
.share {
    position: absolute;
    top: 5px;
    right: 7px;
    width: 105px;
    height: 30px;
    background: #117865;
    color: #fff;
    border: none;
    border-radius: 3px;
    display: flex;
    align-items: center;
    padding: 0 0 0 9px;
    font: 14px "Open Sans", sans-serif;
}
.share-icon {
    width: 20px;
    height: 19px;
    margin-right: 10px;
}
.share-chev {
    width: 12px;
    height: 7px;
    margin-left: 6px;
}
.groups {
    display: flex;
    height: 110px;
}
.group {
    display: flex;
    flex-direction: column;
    border-right: 1px solid #d2d0ce;
    font-size: 13.5px;
}
.items {
    flex: 1;
    display: grid;
    justify-content: start;
}
.group-label {
    text-align: center;
    font-size: 12px;
    line-height: 16px;
    margin-bottom: -2px;
    color: #484644;
}
.group-clipboard {
    width: 200px;
}
.group-clipboard .items {
    grid-template-columns: 50px 1fr;
    padding-left: 10px;
}
.group-data {
    width: 460px;
}
.group-data .items {
    grid-template-columns: 61px 60px 88px 42px 58px 62px 74px;
    padding-left: 5px;
}
.group-queries {
    width: 145px;
}
.group-queries .items {
    grid-template-columns: 71px 52px;
    padding-left: 10px;
}
.group-insert {
    width: 183px;
}
.group-insert .items {
    grid-template-columns: 50px 50px 60px;
    padding-left: 10px;
}
.group-calc {
    width: 143px;
}
.group-calc .items {
    grid-template-columns: 61px 60px;
    padding-left: 11px;
}
.group-sens {
    width: 91px;
}
.group-sens .items, .group-share .items, .group-copilot .items {
    grid-template-columns: 1fr;
    justify-content: stretch;
}
.group-share {
    width: 74px;
}
.group-copilot {
    width: 74px;
}
.rb-item {
    display: flex;
    flex-direction: column;
    align-items: center;
    text-align: center;
    line-height: 20px;
    white-space: nowrap;
    color: #3b3a39;
}
.rb-item > span {
    display: block;
}
.rb-icon {
    width: 40px;
    height: 38px;
    margin: 7px 0 4px;
    flex: none;
    overflow: visible;
}
.chev {
    width: 8px;
    height: 6px;
    margin-left: 3px;
    vertical-align: 1px;
}
.rb-item.dim, .dim {
    color: #b9b7b5;
}
.small-col {
    padding-left: 6px;
}
.small-item {
    height: 30px;
    display: flex;
    align-items: center;
    white-space: nowrap;
}
.small-item svg {
    width: 17px;
    height: 20px;
    margin-right: 7px;
}
.collapse {
    position: absolute;
    right: 6px;
    bottom: 8px;
    width: 11px;
    height: 7px;
}

/* main area */
.main {
    flex: none;
    height: 790px;
    display: flex;
}
.rail {
    width: 51px;
    flex: none;
    border-right: 1px solid #e1dfdd;
    position: relative;
    display: flex;
    flex-direction: column;
    align-items: center;
    padding-top: 16px;
    padding-right: 1px;
}
.rail::before {
    content: "";
    position: absolute;
    left: 0;
    top: 0;
    width: 3px;
    height: 50px;
    background: #117865;
}
.rail-icon {
    width: 22px;
    height: 22px;
    margin-bottom: 28px;
}
.rail-icon.active {
    width: 18px;
    height: 17px;
    margin-bottom: 30px;
}
.dax-text {
    font: 700 7.5px "Open Sans", sans-serif;
    fill: #7a7977;
}
.workspace {
    width: 1600px;
    flex: none;
    display: flex;
    flex-direction: column;
}
.canvas-row {
    height: 745px;
    display: flex;
}
.canvas {
    flex: 1;
    background: #fff;
    padding: 187px 0 0 407px;
}
.visual {
    width: 745px;
    height: 373px;
    border: 2px dotted #555;
    background: #fff;
}
.visual-title {
    font-size: 14px;
    line-height: 18px;
    padding-left: 5px;
    color: #252423;
    letter-spacing: .3px;
}
.legend {
    display: flex;
    align-items: center;
    height: 21px;
    margin-top: 8px;
    padding-left: 5px;
    font-size: 12px;
    color: #605e5c;
}
.legend b {
    width: 59px;
    color: #484644;
}
.dot {
    width: 9px;
    height: 9px;
    border-radius: 50%;
    margin-right: 3px;
}
.dot-business {
    background: #118dff;
}
.dot-luxury {
    background: #12239e;
}
.name-business {
    width: 51px;
}
.plot {
    display: block;
    width: 741px;
    height: 322px;
}
.grid path {
    stroke: #d5d4d2;
    stroke-width: 1;
    stroke-dasharray: 1 3;
    fill: none;
}
.ylabels text {
    font-size: 11px;
    fill: #666;
    text-anchor: end;
}
.axis-title {
    font-size: 12px;
    fill: #252423;
    text-anchor: middle;
}
.line-business, .line-luxury {
    fill: none;
    stroke-width: 3;
    stroke-linejoin: round;
}
.line-business {
    stroke: #118dff;
}
.line-luxury {
    stroke: #12239e;
}
.pts-business circle {
    fill: #118dff;
}
.pts-luxury circle {
    fill: #12239e;
}
.point-labels text, .xlabels text {
    font-size: 10.500px;
    fill: #666;
    text-anchor: middle;
}
.filters-pane {
    width: 41px;
    flex: none;
    background: #fff;
    border-left: 1px solid #a19f9d;
    display: flex;
    flex-direction: column;
    align-items: center;
    padding-top: 16px;
}
.pane-chevs {
    width: 16px;
    height: 16px;
    flex: none;
}
.filter-icon {
    width: 15px;
    height: 16px;
    margin: 19px 0 10px;
}
.pane-vtext {
    writing-mode: vertical-rl;
    font-size: 18px;
    font-weight: 600;
    line-height: 20px;
}
.pagebar {
    height: 45px;
    display: flex;
    background: #f3f2f1;
    padding-top: 1px;
}
.view-switch {
    width: 159px;
    flex: none;
    display: flex;
    align-items: flex-start;
    padding-left: 14px;
    border-right: 1px solid #c8c6c4;
    position: relative;
}
.view-switch::after {
    content: "";
    position: absolute;
    left: 13px;
    top: 35px;
    width: 30px;
    height: 3px;
    background: #117865;
}
.desk-icon {
    width: 24px;
    height: 18px;
    margin: 8px 0 0 1px;
}
.phone-icon {
    width: 16px;
    height: 25px;
    margin: 6px 0 0 37px;
}
.nav-arrow {
    width: 8px;
    height: 12px;
    margin: 14px 0 0 22px;
}
.page-tabs {
    display: grid;
    grid-template-columns: 96px 154px 92px 80px 110px 74px 120px 49px;
    height: 44px;
}
.page-tab {
    height: 44px;
    background: #fff;
    border-right: 1px solid #d2d0ce;
    text-align: center;
    padding-left: 2px;
    font-size: 14px;
    line-height: 44px;
    color: #323130;
    position: relative;
}
.page-tab.active {
    font-weight: 600;
    color: #252423;
    border-bottom: 5px solid #117865;
}
.tab-x {
    position: absolute;
    right: 4px;
    top: 6px;
    font-size: 13px;
    line-height: 14px;
    font-weight: 400;
}
.page-add {
    height: 44px;
    background: #117865;
    color: #fff;
    font-size: 26px;
    font-weight: 700;
    line-height: 40px;
    text-align: center;
}
.viz-pane {
    width: 43px;
    flex: none;
    border-left: 1px solid #e1dfdd;
    border-right: 1px solid #e1dfdd;
    display: flex;
    flex-direction: column;
    align-items: center;
    padding-top: 16px;
}
.viz-pane .pane-vtext {
    margin-top: 19px;
}
.data-pane {
    width: 226px;
    flex: none;
    position: relative;
    padding-left: 6px;
}
.data-head {
    height: 50px;
    padding: 0 9px 0 6px;
    display: flex;
    align-items: center;
    justify-content: space-between;
    font-size: 18px;
    font-weight: 600;
}
.data-search {
    width: 215px;
    height: 32px;
    margin-top: 7px;
    border: 1px solid #8a8886;
    border-radius: 2px;
    display: flex;
    align-items: center;
    padding: 2px 0 0 9px;
    color: #605e5c;
    font-size: 16px;
}
.data-search svg {
    width: 18px;
    height: 18px;
    margin-right: 8px;
}
.field-list {
    height: 678px;
    margin-top: 12px;
    overflow: hidden;
    font-size: 14px;
    color: #484644;
}
.field-root, .field {
    height: 30px;
    display: flex;
    align-items: center;
    white-space: nowrap;
}
.field-root {
    padding-left: 11px;
}
.root-chev {
    width: 15px;
    height: 8px;
    margin-right: 5px;
}
.root-calc {
    width: 17px;
    height: 19px;
    margin-right: 6px;
}
.field {
    padding-left: 50px;
}
.check {
    width: 15px;
    height: 15px;
    border: 1px solid #8a8886;
    border-radius: 2px;
    margin-right: 10px;
    flex: none;
}
.calc {
    width: 16px;
    height: 18px;
    margin-right: 7px;
    flex: none;
}
.scroll-thumb {
    position: absolute;
    left: 211px;
    top: 100px;
    width: 10px;
    height: 482px;
    background: #c8c6c4;
}

/* status bar */
.statusbar {
    height: 30px;
    flex: none;
    border-top: 1px solid #e1dfdd;
    border-bottom: 1px solid #000;
    display: flex;
    align-items: center;
    justify-content: space-between;
    padding: 0 22px 0 5px;
    font-size: 13.500px;
    color: #484644;
}
.zoom-ctl {
    display: flex;
    align-items: center;
}
.zoom-sign {
    font-size: 15px;
    width: 11px;
    text-align: center;
}
.zoom-track {
    width: 125px;
    height: 2px;
    margin: 0 6px 0 5px;
    background: #605e5c;
    position: relative;
}
.zoom-thumb {
    position: absolute;
    left: 41px;
    top: -6px;
    width: 6px;
    height: 13px;
    background: #605e5c;
}
.zoom-tick {
    position: absolute;
    left: 62px;
    top: -3px;
    width: 1px;
    height: 8px;
    background: #605e5c;
}
.zoom-pct {
    margin: 0 24px 0 15px;
    font-size: 14px;
}
.fit-icon {
    width: 20px;
    height: 16px;
}

/* windows taskbar */
.taskbar {
    height: 60px;
    flex: none;
    background: linear-gradient(90deg, #dde9f6 0%, #e2edf8 22%, #d4dcf1 50%, #d6dff2 65%, #e2edf8 100%);
    display: flex;
    align-items: center;
    position: relative;
}
.weather {
    width: 667px;
    flex: none;
    display: flex;
    align-items: center;
    padding-left: 27px;
}
.weather-icon {
    width: 32px;
    height: 36px;
    margin-right: 5px;
    margin-top: -3px;
}
.badge-num {
    font: 700 12px "Open Sans", sans-serif;
    fill: #fff;
    text-anchor: middle;
}
.weather-text {
    display: flex;
    flex-direction: column;
    font-size: 14px;
    line-height: 20px;
    color: #1b1a19;
}
.weather-sub {
    color: #484644;
}
.task-center {
    display: flex;
    align-items: center;
    flex: none;
    width: 595px;
}
.win-logo {
    width: 29px;
    height: 29px;
    margin-right: 18px;
}
.task-search {
    width: 273px;
    height: 38px;
    border-radius: 19px;
    background: #f3f6fc;
    border: 1px solid #e4e8f2;
    display: flex;
    align-items: center;
    padding-left: 13px;
    font-size: 16px;
    color: #484644;
    position: relative;
}
.ts-lens {
    width: 19px;
    height: 19px;
    margin-right: 12px;
}
.ts-art {
    position: absolute;
    right: 6px;
    top: 7px;
    width: 58px;
    height: 27px;
}
.task-icon {
    flex: none;
}
.task-view {
    width: 29px;
    height: 29px;
    margin-left: 16px;
}
.teams {
    width: 27px;
    height: 24px;
    margin-left: 28px;
}
.task-slot {
    width: 31px;
    margin-left: 26px;
    position: relative;
}
.folder {
    width: 31px;
    height: 27px;
    display: block;
}
.run-dot {
    position: absolute;
    left: 12px;
    top: 35px;
    width: 7px;
    height: 5px;
    border-radius: 3px;
    background: #7a7c82;
}
.chrome-slot {
    width: 38px;
    margin-left: 23px;
}
.chrome {
    width: 38px;
    height: 37px;
    display: block;
}
.chrome-slot .run-dot {
    left: 13px;
    top: 39px;
}
.task-tile {
    width: 48px;
    height: 48px;
    margin-left: 9px;
    background: #ecf1fb;
    border-radius: 5px;
    position: relative;
    display: flex;
    justify-content: center;
    padding-top: 9px;
}
.pbi-icon {
    width: 22px;
    height: 30px;
}
.run-bar {
    position: absolute;
    left: 14px;
    bottom: 0;
    width: 20px;
    height: 4px;
    border-radius: 2px;
    background: #0a78d4;
}
.tray {
    flex: 1;
    display: flex;
    align-items: center;
    padding-left: 299px;
}
.tray-chev {
    width: 14px;
    height: 8px;
    margin-right: 22px;
}
.tray-icon {
    flex: none;
}
.cloud-off {
    width: 22px;
    height: 22px;
    margin-right: 19px;
}
.wifi {
    width: 20px;
    height: 18px;
    margin-right: 10px;
}
.vol {
    width: 20px;
    height: 18px;
    margin-right: 10px;
}
.batt {
    width: 21px;
    height: 14px;
}
.clock {
    width: 97px;
    display: flex;
    flex-direction: column;
    align-items: flex-end;
    font-size: 14px;
    line-height: 21px;
    color: #1b1a19;
}
.bell {
    width: 18px;
    height: 19px;
    margin-left: 10px;
    margin-right: 22px;
}
.copilot-pre {
    width: 30px;
    height: 28px;
}
.pre-text {
    font: 700 8px "Open Sans", sans-serif;
    fill: #252423;
    text-anchor: middle;
}
```
